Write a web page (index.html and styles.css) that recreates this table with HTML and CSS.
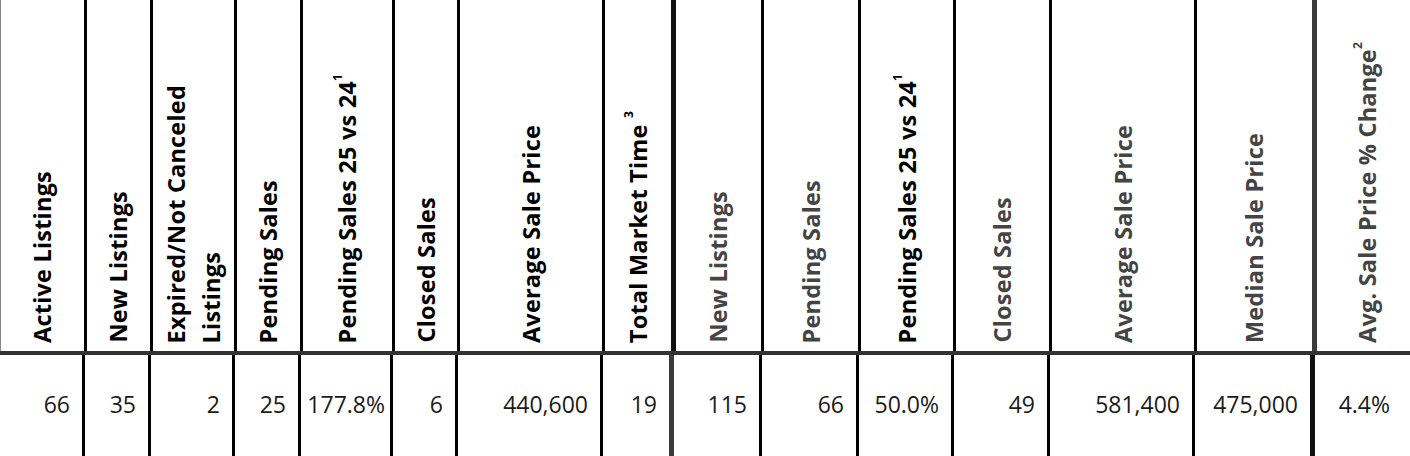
FILE: index.html
```html
<!DOCTYPE html>
<html>
<head>
<meta charset="utf-8">
<link rel="stylesheet" href="styles.css">
</head>
<body>
<div class="sheet">
  <div class="row head">
    <div class="hcell first"><span class="label">Active Listings</span></div>
    <div class="hcell"><span class="label">New Listings</span></div>
    <div class="hcell"><span class="label">Expired/Not Canceled<br>Listings</span></div>
    <div class="hcell"><span class="label">Pending Sales</span></div>
    <div class="hcell"><span class="label">Pending Sales 25 vs 24<sup>1</sup></span></div>
    <div class="hcell"><span class="label">Closed Sales</span></div>
    <div class="hcell"><span class="label">Average Sale Price</span></div>
    <div class="hcell thick"><span class="label">Total Market Time <sup>3</sup></span></div>
    <div class="hcell"><span class="label muted">New Listings</span></div>
    <div class="hcell"><span class="label muted">Pending Sales</span></div>
    <div class="hcell"><span class="label">Pending Sales 25 vs 24<sup>1</sup></span></div>
    <div class="hcell"><span class="label muted">Closed Sales</span></div>
    <div class="hcell"><span class="label muted">Average Sale Price</span></div>
    <div class="hcell thick grey"><span class="label muted">Median Sale Price</span></div>
    <div class="hcell last"><span class="label muted">Avg. Sale Price % Change<sup>2</sup></span></div>
  </div>
  <div class="row body">
    <div class="cell">66</div>
    <div class="cell">35</div>
    <div class="cell">2</div>
    <div class="cell">25</div>
    <div class="cell tight">177.8%</div>
    <div class="cell">6</div>
    <div class="cell">440,600</div>
    <div class="cell thick grey">19</div>
    <div class="cell">115</div>
    <div class="cell">66</div>
    <div class="cell">50.0%</div>
    <div class="cell">49</div>
    <div class="cell">581,400</div>
    <div class="cell thick">475,000</div>
    <div class="cell last">4.4%</div>
  </div>
</div>
</body>
</html>
```

FILE: styles.css
```css
html, body {
  margin: 0;
  padding: 0;
  background: #fff;
}

body {
  width: 1410px;
  height: 456px;
  overflow: hidden;
  font-family: "Open Sans", "DejaVu Sans", sans-serif;
}

.sheet {
  width: 1420px;
}

.row {
  display: grid;
  grid-template-columns: 87px 66px 84px 66px 92px 65px 145px 71px 88px 97px 95px 96px 145px 120px 100px;
}

.head {
  height: 351px;
  border-bottom: 4px solid #333;
}

.hcell {
  box-sizing: border-box;
  display: flex;
  justify-content: center;
  align-items: flex-end;
  padding-bottom: 8px;
  border-right: 3px solid #000;
}

.hcell.first {
  border-left: 1px solid #888;
}

.hcell.thick,
.cell.thick {
  border-right: 5px solid #111;
}

.hcell.grey,
.cell.grey {
  border-right-color: #3a3a3a;
}

.hcell.last,
.cell.last {
  border-right: none;
  padding-right: 0;
}

.label {
  writing-mode: vertical-rl;
  transform: rotate(180deg);
  font-size: 23.5px;
  font-weight: 700;
  letter-spacing: 0.2px;
  line-height: 35px;
  color: #000;
  white-space: nowrap;
}

.label.muted {
  font-weight: 700;
  color: #444;
}

.label sup {
  font-size: 12px;
  line-height: 0;
  vertical-align: 9px;
}

.body {
  height: 101px;
  margin-left: -2px;
}

.cell {
  box-sizing: border-box;
  border-right: 3px solid #000;
  padding: 34px 12px 0 0;
  text-align: right;
  font-size: 23px;
  font-weight: 400;
  color: #1a1a1a;
  line-height: 31px;
  white-space: nowrap;
}

.cell.tight {
  padding-right: 5px;
}

.cell.last {
  padding-right: 25px;
}
```
